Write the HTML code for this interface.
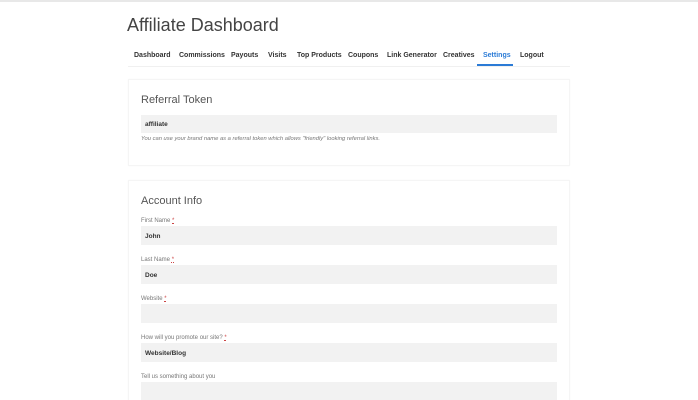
<!DOCTYPE html>
<html><head><meta charset="utf-8"><style>
*{margin:0;padding:0;box-sizing:border-box}
html,body{width:698px;height:400px;overflow:hidden}
body{background:#fff;font-family:"Liberation Sans",sans-serif;position:relative;color:#333}
.a{position:absolute;white-space:nowrap}
.nav{font-size:7px;font-weight:bold;color:#333;top:52px}
.card{position:absolute;left:128px;width:442px;border:1px solid #f5f5f5;box-shadow:0 0 2px rgba(0,0,0,.03)}
.h{font-size:11px;color:#555}
.lbl{font-size:6px;color:#777}
.in{position:absolute;left:141px;width:416px;background:#f2f2f2;height:19px;font-size:6.5px;font-weight:bold;color:#333;padding:7px 0 0 4px}
.req{color:#c44;text-decoration:underline dotted}
</style></head><body>
<div class="a" style="left:0;top:0;width:698px;height:2px;background:#e8e8e8"></div>
<div class="a" style="left:127px;top:15px;font-size:18px;color:#444">Affiliate Dashboard</div>
<div class="a nav" style="left:134px">Dashboard</div>
<div class="a nav" style="left:179px">Commissions</div>
<div class="a nav" style="left:231px">Payouts</div>
<div class="a nav" style="left:268px">Visits</div>
<div class="a nav" style="left:297px">Top Products</div>
<div class="a nav" style="left:348px">Coupons</div>
<div class="a nav" style="left:387px">Link Generator</div>
<div class="a nav" style="left:443px">Creatives</div>
<div class="a nav" style="left:483px;color:#2b7bd6">Settings</div>
<div class="a nav" style="left:520px">Logout</div>
<div class="a" style="left:128px;top:66px;width:442px;height:1px;background:#f0f0f0"></div>
<div class="a" style="left:477px;top:64px;width:36px;height:2px;background:#2b7bd6"></div>

<div class="card" style="top:79px;height:87px"></div>
<div class="a h" style="left:141px;top:94px">Referral Token</div>
<div class="in" style="top:115px;height:18px;padding-top:6px">affiliate</div>
<div class="a" style="left:141px;top:136px;font-size:5.8px;font-style:italic;color:#777">You can use your brand name as a referral token which allows "friendly" looking referral links.</div>

<div class="card" style="top:180px;height:240px"></div>
<div class="a h" style="left:141px;top:195px">Account Info</div>
<div class="a lbl" style="left:141px;top:218px">First Name <span class="req">*</span></div>
<div class="in" style="top:226px">John</div>
<div class="a lbl" style="left:141px;top:257px">Last Name <span class="req">*</span></div>
<div class="in" style="top:265px">Doe</div>
<div class="a lbl" style="left:141px;top:296px">Website <span class="req">*</span></div>
<div class="in" style="top:304px"></div>
<div class="a lbl" style="left:141px;top:335px">How will you promote our site? <span class="req">*</span></div>
<div class="in" style="top:343px">Website/Blog</div>
<div class="a lbl" style="left:141px;top:374px">Tell us something about you</div>
<div class="in" style="top:382px;height:30px"></div>
</body></html>
